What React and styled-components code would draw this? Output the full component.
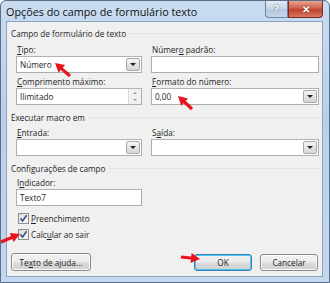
import React from 'react';
import styled, { createGlobalStyle } from 'styled-components';

const Global = createGlobalStyle`
  html, body { margin: 0; padding: 0; background: #fff; }
  * { box-sizing: border-box; }
`;

const Window = styled.div`
  position: relative;
  width: 330px;
  height: 283px;
  display: flex;
  flex-direction: column;
  background: linear-gradient(180deg, #c9dcf0 0%, #b9d0ea 40%, #c3d7ee 100%);
  border: 1px solid #5b6f8a;
  border-radius: 6px 6px 0 0;
  font-family: "Open Sans", "Noto Sans", sans-serif;
  color: #1e1e1e;
  overflow: hidden;
`;

const TitleBar = styled.div`
  height: 20px;
  display: flex;
  justify-content: space-between;
  align-items: flex-start;
  padding-left: 5px;
`;

const Title = styled.span`
  font-size: 10.8px;
  line-height: 22px;
  color: #111;
`;

const Controls = styled.div`
  display: flex;
  margin-right: 6px;
`;

const CtrlButton = styled.div`
  width: ${p => p.$w}px;
  height: 17px;
  display: flex;
  align-items: center;
  justify-content: center;
  font-size: 10px;
  font-weight: bold;
  color: #fff;
  border: 1px solid ${p => (p.$close ? '#7a2a20' : '#6e86a4')};
  border-top: none;
  border-radius: ${p => (p.$close ? '0 0 4px 0' : '0 0 0 4px')};
  background: ${p =>
    p.$close
      ? 'linear-gradient(180deg, #e8a595 0%, #d0604c 45%, #c2412b 55%, #d77a5f 100%)'
      : 'linear-gradient(180deg, #e1ebf6 0%, #c9d8ea 45%, #b4c8e0 55%, #c6d7ec 100%)'};
  text-shadow: 0 0 2px #444;
`;

const Body = styled.div`
  flex: 1;
  margin: 0 6px 5px 5px;
  background: #f0f0f0;
  border: 1px solid #8da2bd;
  padding: 5px 2px 0 9px;
  display: flex;
  flex-direction: column;
`;

const Section = styled.div`
  display: flex;
  align-items: center;
  gap: 4px;
  margin-left: -5px;
  margin-top: ${p => p.$mt || 0}px;
  height: 13px;
  font-size: 8.2px;
  &::after {
    content: '';
    flex: 1;
    height: 1px;
    background: #e2e2e2;
    margin-right: 2px;
  }
`;

const Grid = styled.div`
  display: grid;
  grid-template-columns: 126px 168px;
  column-gap: 9px;
  margin-top: ${p => p.$mt || 0}px;
`;

const Field = styled.div`
  display: flex;
  flex-direction: column;
`;

const Label = styled.span`
  font-size: 8.2px;
  height: 12px;
  line-height: 12px;
  padding-left: 1px;
  u { text-decoration: underline; text-underline-offset: 1px; }
`;

const Box = styled.div`
  height: 17px;
  background: #fff;
  border: 1px solid #abadb3;
  border-top-color: #aeb3b9;
  display: flex;
  align-items: center;
  font-size: 8.2px;
  padding-left: 3px;
  margin-bottom: ${p => p.$mb || 0}px;
`;

const Value = styled.span`
  flex: 1;
`;

const DropBtn = styled.div`
  width: 14px;
  height: 13px;
  margin-right: 1px;
  border: 1px solid #a8a8a8;
  border-radius: 2px;
  background: linear-gradient(180deg, #f6f6f6 0%, #e4e4e4 50%, #d6d6d6 100%);
  display: flex;
  align-items: center;
  justify-content: center;
  &::before {
    content: '';
    border-left: 3px solid transparent;
    border-right: 3px solid transparent;
    border-top: 3px solid #222;
  }
`;

const Spin = styled.div`
  width: 13px;
  height: 15px;
  display: flex;
  flex-direction: column;
  border-left: 1px solid #dcdcdc;
`;

const SpinHalf = styled.div`
  flex: 1;
  display: flex;
  align-items: center;
  justify-content: center;
  background: #f2f2f2;
  &::before {
    content: '';
    border-left: 2px solid transparent;
    border-right: 2px solid transparent;
    ${p => (p.$up ? 'border-bottom: 2px solid #9a9a9a;' : 'border-top: 2px solid #9a9a9a;')}
  }
`;

const CheckRow = styled.label`
  display: flex;
  align-items: center;
  gap: 2px;
  height: 16px;
  padding-left: 2px;
  margin-top: ${p => p.$mt || 0}px;
  font-size: 8.2px;
  u { text-decoration: underline; text-underline-offset: 1px; }
`;

const CheckBox = styled.span`
  width: 11px;
  height: 11px;
  border: 1px solid #8e8f8f;
  background: linear-gradient(135deg, #dcdcdc 0%, #fafafa 100%);
  display: flex;
  align-items: center;
  justify-content: center;
`;

const Footer = styled.div`
  flex: 1;
  display: flex;
  align-items: flex-end;
  padding: 0 2px 5px 0;
`;

const Spacer = styled.span`
  flex: 1;
`;

const Button = styled.div`
  height: ${p => p.$h || 18}px;
  width: ${p => p.$w}px;
  display: flex;
  align-items: center;
  justify-content: center;
  font-size: 8.2px;
  border: 1px solid ${p => (p.$default ? '#3c7fb1' : '#8a8a8a')};
  border-radius: 3px;
  background: linear-gradient(180deg, #f2f2f2 0%, #ebebeb 48%, #dddddd 52%, #cfcfcf 100%);
  box-shadow: ${p => (p.$default ? 'inset 0 0 0 1px #48c4f5' : 'inset 0 0 0 1px #fcfcfc')};
  margin-left: ${p => p.$ml || 0}px;
  u { text-decoration: underline; text-underline-offset: 1px; }
`;

const Arrow = styled.svg`
  position: absolute;
  left: ${p => p.$x}px;
  top: ${p => p.$y}px;
  overflow: visible;
  pointer-events: none;
`;

function RedArrow({ x1, y1, x2, y2 }) {
  const ang = Math.atan2(y2 - y1, x2 - x1);
  const len = Math.hypot(x2 - x1, y2 - y1);
  const deg = (ang * 180) / Math.PI;
  return (
    <Arrow $x={x1} $y={y1} width="1" height="1">
      <g transform={`rotate(${deg})`}>
        <rect x="0" y="-1.6" width={len - 7} height="3.2" fill="#e8141b" />
        <polygon points={`${len},0 ${len - 9},-5 ${len - 9},5`} fill="#e8141b" />
      </g>
    </Arrow>
  );
}

function Check() {
  return (
    <svg width="9" height="9" viewBox="0 0 9 9">
      <path d="M1.5 4.5 L3.6 7 L7.6 1.2" fill="none" stroke="#3b4f7c" strokeWidth="1.6" />
    </svg>
  );
}

function Combo({ value, mb }) {
  return (
    <Box $mb={mb}>
      <Value>{value}</Value>
      <DropBtn />
    </Box>
  );
}

export default function App() {
  return (
    <>
      <Global />
      <Window>
        <TitleBar>
          <Title>Opções do campo de formulário texto</Title>
          <Controls>
            <CtrlButton $w={23}>?</CtrlButton>
            <CtrlButton $w={35} $close>✕</CtrlButton>
          </Controls>
        </TitleBar>
        <Body>
          <Section>Campo de formulário de texto</Section>
          <Grid $mt={4}>
            <Field>
              <Label><u>T</u>ipo:</Label>
              <Combo value="Número" mb={3} />
            </Field>
            <Field>
              <Label>Númer<u>o</u> padrão:</Label>
              <Box $mb={3} />
            </Field>
            <Field>
              <Label><u>C</u>omprimento máximo:</Label>
              <Box>
                <Value>Ilimitado</Value>
                <Spin>
                  <SpinHalf $up />
                  <SpinHalf />
                </Spin>
              </Box>
            </Field>
            <Field>
              <Label><u>F</u>ormato do número:</Label>
              <Combo value="0,00" />
            </Field>
          </Grid>
          <Section $mt={6}>Executar macro em</Section>
          <Grid $mt={3}>
            <Field>
              <Label><u>E</u>ntrada:</Label>
              <Combo value="" />
            </Field>
            <Field>
              <Label>S<u>a</u>ída:</Label>
              <Combo value="" />
            </Field>
          </Grid>
          <Section $mt={6}>Configurações de campo</Section>
          <Grid $mt={2}>
            <Field>
              <Label>I<u>n</u>dicador:</Label>
              <Box>Texto7</Box>
            </Field>
          </Grid>
          <CheckRow $mt={4}>
            <CheckBox><Check /></CheckBox>
            <span><u>P</u>reenchimento</span>
          </CheckRow>
          <CheckRow>
            <CheckBox><Check /></CheckBox>
            <span>Calc<u>u</u>lar ao sair</span>
          </CheckRow>
          <Footer>
            <Button $w={80} $ml={-5}>Te<u>x</u>to de ajuda...</Button>
            <Spacer />
            <Button $w={58} $h={17} $default>OK</Button>
            <Button $w={58} $h={17} $ml={8}>Cancelar</Button>
          </Footer>
        </Body>
        <RedArrow x1={69} y1={75} x2={54} y2={62} />
        <RedArrow x1={191} y1={108} x2={177} y2={95} />
        <RedArrow x1={0} y1={241} x2={19} y2={233} />
        <RedArrow x1={180} y1={256} x2={199} y2={258} />
      </Window>
    </>
  );
}
